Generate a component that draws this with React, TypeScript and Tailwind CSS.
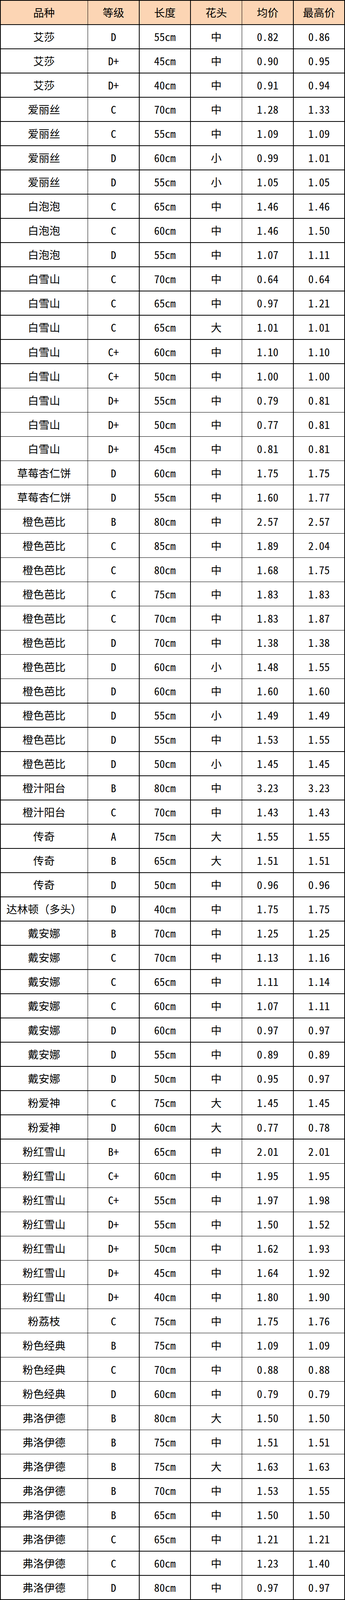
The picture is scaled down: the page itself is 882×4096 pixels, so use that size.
import React from "react";

type Row = [string, string, string, string, string, string];

const rows: Row[] = [
  ["艾莎", "D", "55cm", "中", "0.82", "0.86"],
  ["艾莎", "D+", "45cm", "中", "0.90", "0.95"],
  ["艾莎", "D+", "40cm", "中", "0.91", "0.94"],
  ["爱丽丝", "C", "70cm", "中", "1.28", "1.33"],
  ["爱丽丝", "C", "55cm", "中", "1.09", "1.09"],
  ["爱丽丝", "D", "60cm", "小", "0.99", "1.01"],
  ["爱丽丝", "D", "55cm", "小", "1.05", "1.05"],
  ["白泡泡", "C", "65cm", "中", "1.46", "1.46"],
  ["白泡泡", "C", "60cm", "中", "1.46", "1.50"],
  ["白泡泡", "D", "55cm", "中", "1.07", "1.11"],
  ["白雪山", "C", "70cm", "中", "0.64", "0.64"],
  ["白雪山", "C", "65cm", "中", "0.97", "1.21"],
  ["白雪山", "C", "65cm", "大", "1.01", "1.01"],
  ["白雪山", "C+", "60cm", "中", "1.10", "1.10"],
  ["白雪山", "C+", "50cm", "中", "1.00", "1.00"],
  ["白雪山", "D+", "55cm", "中", "0.79", "0.81"],
  ["白雪山", "D+", "50cm", "中", "0.77", "0.81"],
  ["白雪山", "D+", "45cm", "中", "0.81", "0.81"],
  ["草莓杏仁饼", "D", "60cm", "中", "1.75", "1.75"],
  ["草莓杏仁饼", "D", "55cm", "中", "1.60", "1.77"],
  ["橙色芭比", "B", "80cm", "中", "2.57", "2.57"],
  ["橙色芭比", "C", "85cm", "中", "1.89", "2.04"],
  ["橙色芭比", "C", "80cm", "中", "1.68", "1.75"],
  ["橙色芭比", "C", "75cm", "中", "1.83", "1.83"],
  ["橙色芭比", "C", "70cm", "中", "1.83", "1.87"],
  ["橙色芭比", "D", "70cm", "中", "1.38", "1.38"],
  ["橙色芭比", "D", "60cm", "小", "1.48", "1.55"],
  ["橙色芭比", "D", "60cm", "中", "1.60", "1.60"],
  ["橙色芭比", "D", "55cm", "小", "1.49", "1.49"],
  ["橙色芭比", "D", "55cm", "中", "1.53", "1.55"],
  ["橙色芭比", "D", "50cm", "小", "1.45", "1.45"],
  ["橙汁阳台", "B", "80cm", "中", "3.23", "3.23"],
  ["橙汁阳台", "C", "70cm", "中", "1.43", "1.43"],
  ["传奇", "A", "75cm", "大", "1.55", "1.55"],
  ["传奇", "B", "65cm", "大", "1.51", "1.51"],
  ["传奇", "D", "50cm", "中", "0.96", "0.96"],
  ["达林顿（多头）", "D", "40cm", "中", "1.75", "1.75"],
  ["戴安娜", "B", "70cm", "中", "1.25", "1.25"],
  ["戴安娜", "C", "70cm", "中", "1.13", "1.16"],
  ["戴安娜", "C", "65cm", "中", "1.11", "1.14"],
  ["戴安娜", "C", "60cm", "中", "1.07", "1.11"],
  ["戴安娜", "D", "60cm", "中", "0.97", "0.97"],
  ["戴安娜", "D", "55cm", "中", "0.89", "0.89"],
  ["戴安娜", "D", "50cm", "中", "0.95", "0.97"],
  ["粉爱神", "C", "75cm", "大", "1.45", "1.45"],
  ["粉爱神", "D", "60cm", "大", "0.77", "0.78"],
  ["粉红雪山", "B+", "65cm", "中", "2.01", "2.01"],
  ["粉红雪山", "C+", "60cm", "中", "1.95", "1.95"],
  ["粉红雪山", "C+", "55cm", "中", "1.97", "1.98"],
  ["粉红雪山", "D+", "55cm", "中", "1.50", "1.52"],
  ["粉红雪山", "D+", "50cm", "中", "1.62", "1.93"],
  ["粉红雪山", "D+", "45cm", "中", "1.64", "1.92"],
  ["粉红雪山", "D+", "40cm", "中", "1.80", "1.90"],
  ["粉荔枝", "C", "75cm", "中", "1.75", "1.76"],
  ["粉色经典", "B", "75cm", "中", "1.09", "1.09"],
  ["粉色经典", "C", "70cm", "中", "0.88", "0.88"],
  ["粉色经典", "D", "60cm", "中", "0.79", "0.79"],
  ["弗洛伊德", "B", "80cm", "大", "1.50", "1.50"],
  ["弗洛伊德", "B", "75cm", "中", "1.51", "1.51"],
  ["弗洛伊德", "B", "75cm", "大", "1.63", "1.63"],
  ["弗洛伊德", "B", "70cm", "中", "1.53", "1.55"],
  ["弗洛伊德", "B", "65cm", "中", "1.50", "1.50"],
  ["弗洛伊德", "C", "65cm", "中", "1.21", "1.21"],
  ["弗洛伊德", "C", "60cm", "中", "1.23", "1.40"],
  ["弗洛伊德", "D", "80cm", "中", "0.97", "0.97"],
];

const headers = ["品种", "等级", "长度", "花头", "均价", "最高价"];

const cjk = "font-['Noto_Sans_CJK_SC',sans-serif] text-[27.5px]";
const mono = "font-['Noto_Sans_Mono_CJK_SC','DejaVu_Sans_Mono',monospace] text-[27.5px]";

export default function App() {
  return (
    <div className="w-[882px] bg-white">
      <div className="grid grid-cols-[222px_repeat(5,minmax(0,1fr))] auto-rows-[60.44px] gap-[1.6px] bg-black p-[1.6px] text-black">
        {headers.map((h) => (
          <div key={h} className={`flex items-center justify-center bg-[#fcd5b4] leading-none ${cjk}`}>
            {h}
          </div>
        ))}
        {rows.map((r, i) => (
          <React.Fragment key={i}>
            <div className={`flex items-center justify-center bg-white leading-none whitespace-nowrap ${cjk}`}>{r[0]}</div>
            <div className={`flex items-center justify-center bg-white leading-none ${mono}`}>{r[1]}</div>
            <div className={`flex items-center justify-center bg-white leading-none ${mono}`}>{r[2]}</div>
            <div className={`flex items-center justify-center bg-white leading-none ${cjk}`}>{r[3]}</div>
            <div className={`flex items-center justify-center bg-white leading-none ${mono}`}>{r[4]}</div>
            <div className={`flex items-center justify-center bg-white leading-none ${mono}`}>{r[5]}</div>
          </React.Fragment>
        ))}
      </div>
    </div>
  );
}
